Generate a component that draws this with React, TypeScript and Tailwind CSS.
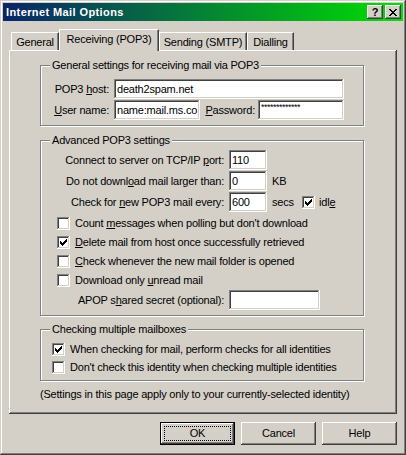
import React from "react";

const SUNKEN =
  "shadow-[inset_-1px_-1px_#ffffff,inset_1px_1px_#808080,inset_-2px_-2px_#d4d0c8,inset_2px_2px_#404040]";
const RAISED =
  "shadow-[inset_-1px_-1px_#404040,inset_1px_1px_#ffffff,inset_-2px_-2px_#808080]";

function U({ children }: { children: React.ReactNode }) {
  return <span className="underline decoration-1 underline-offset-[1px]">{children}</span>;
}

function Edit({ className, children }: { className: string; children?: React.ReactNode }) {
  return (
    <div
      className={`h-[20px] bg-white ${SUNKEN} flex items-center pl-[3px] overflow-hidden whitespace-nowrap shrink-0 ${className}`}
    >
      {children}
    </div>
  );
}

function Box({ checked }: { checked?: boolean }) {
  return (
    <div className={`w-[13px] h-[13px] bg-white shrink-0 relative ${SUNKEN}`}>
      {checked && (
        <svg
          className="absolute left-[3px] top-[3px]"
          width="7"
          height="7"
          viewBox="0 0 7 7"
          shapeRendering="crispEdges"
        >
          <path
            fill="#000"
            d="M0 2h1v3H0z M1 3h1v3H1z M2 4h1v3H2z M3 3h1v3H3z M4 2h1v3H4z M5 1h1v3H5z M6 0h1v3H6z"
          />
        </svg>
      )}
    </div>
  );
}

function Group({
  title,
  className,
  children,
}: {
  title: string;
  className: string;
  children: React.ReactNode;
}) {
  return (
    <div
      className={`relative w-[324px] border border-[#808080] shadow-[inset_1px_1px_#ffffff,1px_1px_#ffffff] ${className}`}
    >
      <div className="absolute left-[9px] top-[-7px] bg-[#d4d0c8] px-[2px] leading-[13px] whitespace-nowrap">
        {title}
      </div>
      {children}
    </div>
  );
}

function Tab({ label, selected, className }: { label: string; selected?: boolean; className: string }) {
  if (selected) {
    return (
      <div
        className={`relative z-10 h-[22px] mb-[-1px] bg-[#d4d0c8] border-t border-l border-white border-r border-r-[#404040] shadow-[inset_-1px_0_#808080] flex items-start justify-center pt-[3px] whitespace-nowrap ${className}`}
      >
        {label}
      </div>
    );
  }
  return (
    <div
      className={`h-[18px] bg-[#d4d0c8] border-t border-l border-white border-r border-r-[#404040] shadow-[inset_-1px_0_#808080] flex items-center justify-center pt-[1px] whitespace-nowrap ${className}`}
    >
      {label}
    </div>
  );
}

function TitleBtn({ children }: { children: React.ReactNode }) {
  return (
    <div
      className={`w-[16px] h-[14px] bg-[#d4d0c8] ${RAISED} flex items-center justify-center text-black`}
    >
      {children}
    </div>
  );
}

function Btn({ children, def }: { children: React.ReactNode; def?: boolean }) {
  if (def) {
    return (
      <div className="w-[75px] h-[23px] border border-black">
        <div className={`w-full h-full ${RAISED} p-[3px]`}>
          <div className="w-full h-full border border-dotted border-black flex items-center justify-center">
            {children}
          </div>
        </div>
      </div>
    );
  }
  return (
    <div className={`w-[75px] h-[23px] ${RAISED} flex items-center justify-center`}>{children}</div>
  );
}

export default function App() {
  return (
    <div
      className="w-[406px] h-[455px] bg-[#d4d0c8] p-[3px] flex flex-col font-['Liberation_Sans',Arial,sans-serif] text-[11px] leading-[13px] tracking-[-0.2px] text-black shadow-[inset_-1px_-1px_#404040,inset_1px_1px_#d4d0c8,inset_-2px_-2px_#808080,inset_2px_2px_#ffffff]"
    >
      {/* Title bar */}
      <div className="h-[18px] shrink-0 flex items-center bg-[linear-gradient(to_right,#0a246a,#00e000)] pl-[3px] pr-[2px]">
        <span className="font-bold text-white text-[11px] leading-[13px] tracking-[0.4px]">
          Internet Mail Options
        </span>
        <div className="ml-auto flex gap-[2px]">
          <TitleBtn>
            <span className="font-bold text-[11px] leading-[11px]">?</span>
          </TitleBtn>
          <TitleBtn>
            <svg width="8" height="7" viewBox="0 0 8 7" shapeRendering="crispEdges">
              <path
                fill="#000"
                d="M0 0h2v1H0z M6 0h2v1H6z M1 1h2v1H1z M5 1h2v1H5z M2 2h4v1H2z M3 3h2v1H3z M2 4h4v1H2z M1 5h2v1H1z M5 5h2v1H5z M0 6h2v1H0z M6 6h2v1H6z"
              />
            </svg>
          </TitleBtn>
        </div>
      </div>

      {/* Tabs */}
      <div className="h-[29px] shrink-0 flex items-end pl-[8px]">
        <Tab label="General" className="w-[48px]" />
        <Tab label="Receiving (POP3)" selected className="w-[100px]" />
        <Tab label="Sending (SMTP)" className="w-[88px]" />
        <Tab label="Dialling" className="w-[47px]" />
      </div>

      {/* Panel */}
      <div className={`mx-[6px] h-[364px] shrink-0 ${RAISED} flex flex-col pl-[31px] pt-[15px]`}>
        {/* Group 1 */}
        <Group title="General settings for receiving mail via POP3" className="pt-[13px] pb-[5px]">
          <div className="flex items-center h-[20px]">
            <div className="w-[68px] text-right whitespace-nowrap">
              POP3 <U>h</U>ost:
            </div>
            <Edit className="w-[230px] ml-[5px]">death2spam.net</Edit>
          </div>
          <div className="flex items-center h-[20px] mt-[1px]">
            <div className="w-[68px] text-right whitespace-nowrap">
              <U>U</U>ser name:
            </div>
            <Edit className="w-[86px] ml-[5px]">name:mail.ms.co</Edit>
            <div className="w-[58px] text-right pr-[3px] whitespace-nowrap">
              <U>P</U>assword:
            </div>
            <Edit className="w-[86px] items-start pt-[3px]">
              <span className="text-[9px] leading-[9px] tracking-[-0.5px]">*************</span>
            </Edit>
          </div>
        </Group>

        {/* Group 2 */}
        <Group title="Advanced POP3 settings" className="mt-[14px] pt-[9px] pb-[5px]">
          <div className="flex items-center h-[20px]">
            <div className="w-[183px] text-right whitespace-nowrap">
              Connect to server on TCP/IP <U>p</U>ort:
            </div>
            <Edit className="w-[38px] ml-[5px]">110</Edit>
          </div>
          <div className="flex items-center h-[20px] mt-[1px]">
            <div className="w-[183px] text-right whitespace-nowrap">
              Do not downl<U>o</U>ad mail larger than:
            </div>
            <Edit className="w-[38px] ml-[5px]">0</Edit>
            <span className="ml-[5px]">KB</span>
          </div>
          <div className="flex items-center h-[20px] mt-[1px]">
            <div className="w-[183px] text-right whitespace-nowrap">
              Check for <U>n</U>ew POP3 mail every:
            </div>
            <Edit className="w-[38px] ml-[5px]">600</Edit>
            <span className="ml-[5px] w-[30px]">secs</span>
            <Box checked />
            <span className="ml-[4px]">
              idl<U>e</U>
            </span>
          </div>
          <div className="mt-[2px] pl-[16px] flex flex-col">
            <div className="h-[19px] flex items-center gap-[5px] whitespace-nowrap">
              <Box />
              <span>
                Count <U>m</U>essages when polling but don't download
              </span>
            </div>
            <div className="h-[19px] flex items-center gap-[5px] whitespace-nowrap">
              <Box checked />
              <span>
                <U>D</U>elete mail from host once successfully retrieved
              </span>
            </div>
            <div className="h-[19px] flex items-center gap-[5px] whitespace-nowrap">
              <Box />
              <span>
                <U>C</U>heck whenever the new mail folder is opened
              </span>
            </div>
            <div className="h-[19px] flex items-center gap-[5px] whitespace-nowrap">
              <Box />
              <span>
                Download only <U>u</U>nread mail
              </span>
            </div>
          </div>
          <div className="flex items-center h-[20px]">
            <div className="w-[183px] text-right whitespace-nowrap">
              APOP s<U>h</U>ared secret (optional):
            </div>
            <Edit className="w-[91px] ml-[5px]" />
          </div>
        </Group>

        {/* Group 3 */}
        <Group title="Checking multiple mailboxes" className="mt-[13px] pt-[11px] pb-[4px] pl-[11px]">
          <div className="h-[17px] flex items-center gap-[5px] whitespace-nowrap">
            <Box checked />
            <span>When checking for mail, perform checks for all identities</span>
          </div>
          <div className="h-[17px] mt-[1px] flex items-center gap-[5px] whitespace-nowrap">
            <Box />
            <span>Don't check this identity when checking multiple identities</span>
          </div>
        </Group>

        <div className="mt-[7px] whitespace-nowrap">
          (Settings in this page apply only to your currently-selected identity)
        </div>
      </div>

      {/* Buttons */}
      <div className="mt-[8px] flex justify-end gap-[6px] pr-[6px]">
        <Btn def>OK</Btn>
        <Btn>Cancel</Btn>
        <Btn>Help</Btn>
      </div>
    </div>
  );
}
